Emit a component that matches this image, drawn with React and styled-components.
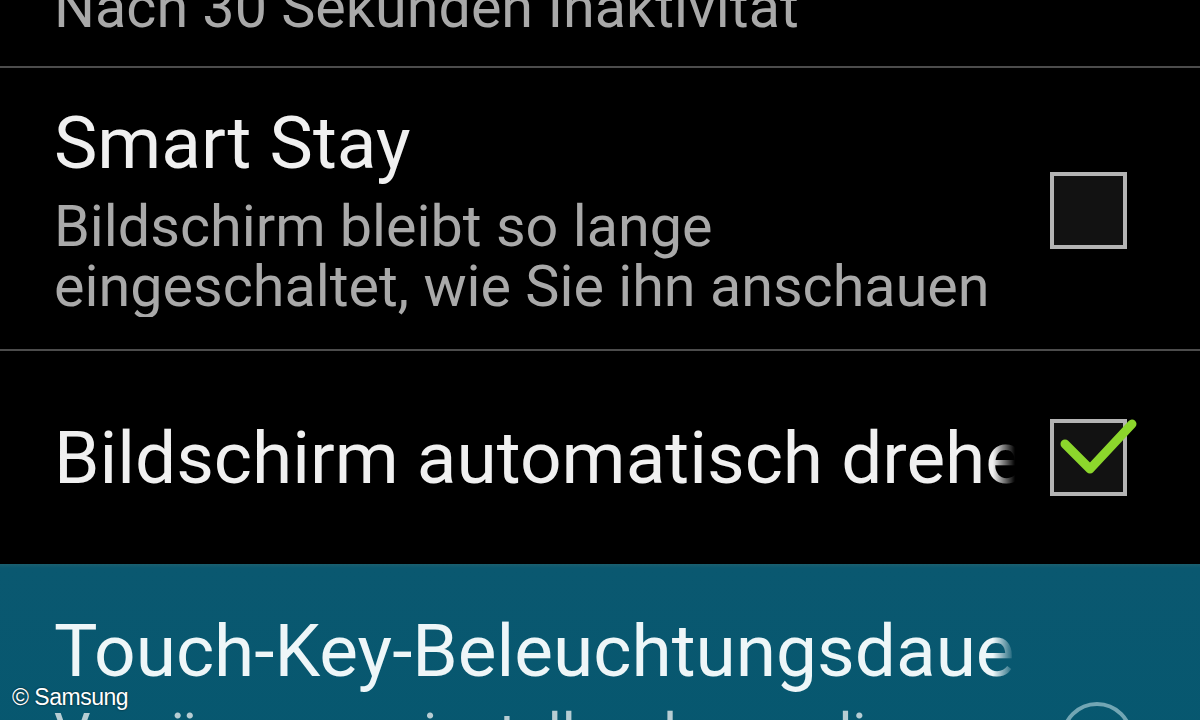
import React from "react";
import styled, { createGlobalStyle } from "styled-components";

const GlobalStyle = createGlobalStyle`
  html, body {
    margin: 0;
    padding: 0;
    background: #000;
  }
  body {
    font-family: Roboto, "Noto Sans", sans-serif;
  }
`;

const Screen = styled.div`
  width: 1200px;
  height: 720px;
  overflow: hidden;
  background: #000;
  position: relative;
`;

const List = styled.div`
  display: flex;
  flex-direction: column;
  margin-top: -151px;
`;

const Row = styled.div`
  display: flex;
  align-items: center;
  padding: ${({ pad }) => pad || "35px 0 33px 0"};
  background: ${({ active }) =>
    active ? "linear-gradient(#1b5f6f 0, #0a5870 4px, #05576f 100%)" : "transparent"};
  min-height: ${({ minH }) => minH || "auto"};
  box-sizing: border-box;
`;

const Divider = styled.div`
  height: 2px;
  background: #4c4c4c;
  flex-shrink: 0;
`;

const TextCol = styled.div`
  flex: 1;
  min-width: 0;
  padding-left: 54px;
  overflow: hidden;
  -webkit-mask-image: linear-gradient(to right, #000 calc(100% - 22px), transparent 100%);
  mask-image: linear-gradient(to right, #000 calc(100% - 22px), transparent 100%);
`;

const Title = styled.div`
  font-size: 73px;
  line-height: 80px;
  color: ${({ active }) => (active ? "#eef6f8" : "#f0f0f0")};
  white-space: nowrap;
`;

const Summary = styled.div`
  font-size: 57.5px;
  line-height: 60px;
  margin-top: 14px;
  color: ${({ active }) => (active ? "#b7cdd3" : "#a9a9a9")};
  white-space: nowrap;
`;

const Control = styled.div`
  width: 185px;
  flex-shrink: 0;
  display: flex;
  padding-left: 35px;
  box-sizing: border-box;
  align-self: ${({ top }) => (top ? "flex-start" : "center")};
  margin-top: ${({ top }) => top || 0};
`;

const Box = styled.div`
  position: relative;
  width: 77px;
  height: 77px;
  border: 4px solid #b4b4b4;
  background: #121212;
  box-sizing: border-box;
`;

const Check = styled.svg`
  position: absolute;
  left: -4px;
  top: -4px;
  overflow: visible;
`;

const Radio = styled.div`
  width: 72px;
  height: 72px;
  border-radius: 50%;
  border: 4px solid #72a6b4;
  box-sizing: border-box;
  margin-left: 11px;
`;

const Watermark = styled.div`
  position: absolute;
  left: 12px;
  bottom: 11px;
  font-family: "Liberation Sans", Arial, sans-serif;
  font-size: 23px;
  line-height: 23px;
  letter-spacing: -0.5px;
  color: #fff;
  text-shadow: 0 0 2px rgba(0, 0, 0, 0.8);
`;

const Checkbox = ({ checked }) => (
  <Box>
    {checked && (
      <Check width="77" height="77" viewBox="0 0 77 77">
        <polyline
          points="15,25 40,50 82,5"
          fill="none"
          stroke="#8cd62c"
          strokeWidth="9"
          strokeLinecap="round"
          strokeLinejoin="round"
        />
      </Check>
    )}
  </Box>
);

const App = () => {
  return (
    <>
      <GlobalStyle />
      <Screen>
        <List>
          <Row pad="35px 0 28px 0">
            <TextCol>
              <Title>Bildschirm-Timeout</Title>
              <Summary>Nach 30 Sekunden Inaktivität</Summary>
            </TextCol>
            <Control />
          </Row>
          <Divider />
          <Row pad="35px 0 32px 0">
            <TextCol>
              <Title>Smart Stay</Title>
              <Summary>Bildschirm bleibt so lange</Summary>
              <Summary style={{ marginTop: 0 }}>eingeschaltet, wie Sie ihn anschauen</Summary>
            </TextCol>
            <Control>
              <Checkbox />
            </Control>
          </Row>
          <Divider />
          <Row pad="0" minH="213px">
            <TextCol>
              <Title>Bildschirm automatisch drehen</Title>
            </TextCol>
            <Control>
              <Checkbox checked />
            </Control>
          </Row>
          <Row active pad="38px 0 30px 0">
            <TextCol>
              <Title active>Touch-Key-Beleuchtungsdauer</Title>
              <Summary active>Verzögerung einstellen, bevor die</Summary>
            </TextCol>
            <Control top="100px">
              <Radio />
            </Control>
          </Row>
        </List>
        <Watermark>© Samsung</Watermark>
      </Screen>
    </>
  );
};

export default App;
